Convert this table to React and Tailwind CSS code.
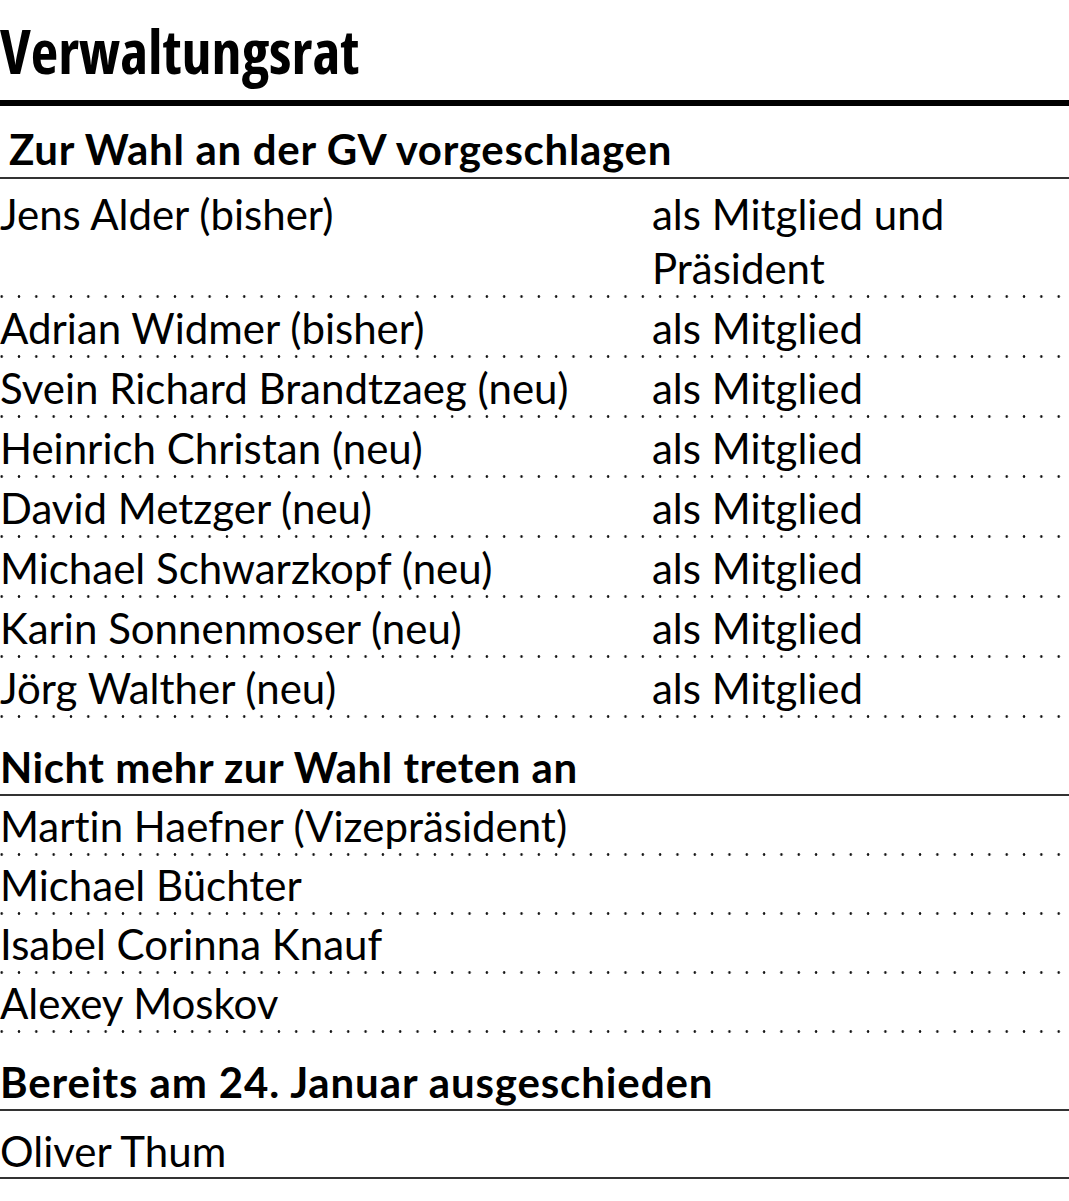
const elected = [
  { name: "Adrian Widmer (bisher)", role: "als Mitglied" },
  { name: "Svein Richard Brandtzaeg (neu)", role: "als Mitglied" },
  { name: "Heinrich Christan (neu)", role: "als Mitglied" },
  { name: "David Metzger (neu)", role: "als Mitglied" },
  { name: "Michael Schwarzkopf (neu)", role: "als Mitglied" },
  { name: "Karin Sonnenmoser (neu)", role: "als Mitglied" },
  { name: "Jörg Walther (neu)", role: "als Mitglied" },
];

const leaving = ["Martin Haefner (Vizepräsident)", "Michael Büchter", "Isabel Corinna Knauf", "Alexey Moskov"];

function Dots() {
  return (
    <div className="h-[3px] w-full bg-[radial-gradient(circle,#111_1px,transparent_1.6px)] bg-repeat-x [background-size:17.33px_3px] [background-position:-7px_0]" />
  );
}

function Rule() {
  return <div className="h-[2px] w-full bg-[#333]" />;
}

export default function App() {
  return (
    <div className="w-[1069px] h-[1201px] bg-white text-black font-['Lato','Open_Sans',sans-serif] [font-variant-ligatures:none]">
      <h1 className="pt-[21px] text-[60px] leading-[60px] font-bold font-['Open_Sans',sans-serif] [font-stretch:75%]">Verwaltungsrat</h1>
      <div className="mt-[19px] h-[6px] bg-black" />

      <h2 className="mt-[22px] pl-[9px] text-[42px] leading-[42px] font-bold tracking-[0.7px]">Zur Wahl an der GV vorgeschlagen</h2>
      <div className="mt-[7px]"><Rule /></div>

      <div className="flex pt-[8px] text-[42px] leading-[54px]">
        <div className="w-[652px]">Jens Alder (bisher)</div>
        <div className="flex-1">als Mitglied und<br />Präsident</div>
      </div>
      <Dots />

      {elected.map((p) => (
        <div key={p.name}>
          <div className="flex pt-[3px] text-[42px] leading-[54px]">
            <div className="w-[652px]">{p.name}</div>
            <div className="flex-1">{p.role}</div>
          </div>
          <Dots />
        </div>
      ))}

      <h2 className="mt-[28px] text-[42px] leading-[42px] font-bold tracking-[0.5px]">Nicht mehr zur Wahl treten an</h2>
      <div className="mt-[6px]"><Rule /></div>

      {leaving.map((n, i) => (
        <div key={n}>
          <div className={i === 0 ? "pt-[3px] text-[42px] leading-[54px]" : "pt-[2px] text-[42px] leading-[54px]"}>{n}</div>
          <Dots />
        </div>
      ))}

      <h2 className="mt-[28px] text-[42px] leading-[42px] font-bold tracking-[0.9px]">Bereits am 24. Januar ausgeschieden</h2>
      <div className="mt-[6px]"><Rule /></div>

      <div className="pt-[15px] pb-[1px] text-[42px] leading-[50px]">Oliver Thum</div>
      <Rule />
    </div>
  );
}
